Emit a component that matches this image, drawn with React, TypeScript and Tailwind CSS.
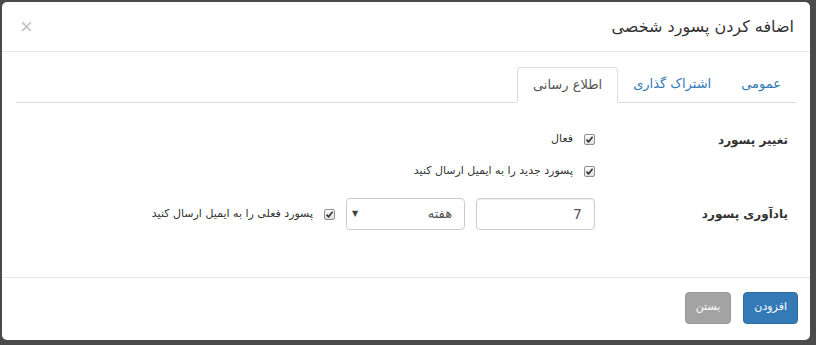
import React from "react"

const fa = "font-['DejaVu_Sans','Noto_Sans',sans-serif]"

function Check() {
  return (
    <span className="inline-flex w-[11px] h-[11px] items-center justify-center border border-[#8f8f8f] rounded-[2px] bg-gradient-to-b from-[#fdfdfd] to-[#dcdcdc]">
      <svg width="9" height="9" viewBox="0 0 9 9">
        <path d="M1.5 4.6 L3.6 6.8 L7.6 1.8" fill="none" stroke="#333" strokeWidth="1.6" />
      </svg>
    </span>
  )
}

export default function App() {
  return (
    <div className="w-[816px] h-[345px] bg-[#4a4a4a] p-[2px] pr-[6px] overflow-hidden">
      <div dir="rtl" className={`w-[808px] h-[338px] bg-white rounded-[5px] flex flex-col text-[#333] ${fa}`}>
        {/* header */}
        <div className="h-[50px] flex items-center justify-between px-[16px] border-b border-[#e5e5e5]">
          <h4 className="text-[16px] text-[#333]">اضافه کردن پسورد شخصی</h4>
          <span className="text-[22px] leading-none text-[#c4c4c4] font-['Liberation_Sans',sans-serif] pl-[2px]">×</span>
        </div>

        {/* body */}
        <div className="flex-1 px-[14px] pt-[15px]">
          <ul className="flex items-end border-b border-[#ddd] h-[36px] text-[13px]">
            <li className="h-[36px] px-[15px] flex items-center text-[#337ab7]">عمومی</li>
            <li className="h-[36px] px-[15px] flex items-center text-[#337ab7]">اشتراک گذاری</li>
            <li className="h-[36px] -mb-px px-[15px] flex items-center text-[#555] bg-white border border-[#ddd] border-b-white rounded-t-[4px]">
              اطلاع رسانی
            </li>
          </ul>

          <div className="pt-[24px] text-[11px]">
            <div className="flex">
              <div className="w-[201px] shrink-0 pr-[8px] font-bold text-[12px] leading-[26px]">تغییر پسورد</div>
              <div className="flex flex-col gap-[8px]">
                <label className="flex items-center gap-[11px] h-[24px]">
                  <Check />
                  <span>فعال</span>
                </label>
                <label className="flex items-center gap-[11px] h-[24px]">
                  <Check />
                  <span>پسورد جدید را به ایمیل ارسال کنید</span>
                </label>
              </div>
            </div>

            <div className="flex items-center mt-[15px]">
              <div className="w-[201px] shrink-0 pr-[8px] font-bold text-[12px]">یادآوری پسورد</div>
              <div className="flex items-center gap-[11px]">
                <div className="w-[119px] h-[32px] border border-[#ccc] rounded-[4px] flex items-center px-[12px] text-[14px] text-[#555] shadow-[inset_0_1px_1px_rgba(0,0,0,0.075)]">
                  7
                </div>
                <div className="w-[119px] h-[32px] border border-[#ccc] rounded-[4px] flex items-center justify-between px-[12px] pl-[5px] text-[13px] text-[#555]">
                  <span>هفته</span>
                  <span className="text-[8px] text-[#444]">▼</span>
                </div>
                <label className="flex items-center gap-[11px]">
                  <Check />
                  <span>پسورد فعلی را به ایمیل ارسال کنید</span>
                </label>
              </div>
            </div>
          </div>
        </div>

        {/* footer */}
        <div className="h-[63px] border-t border-[#e5e5e5] flex items-center gap-[12px] px-[12px] pb-[3px] text-[11px]">
          <button className="h-[32px] px-[10px] rounded-[4px] bg-[#337ab7] border border-[#2e6da4] text-white">افزودن</button>
          <button className="h-[32px] px-[10px] rounded-[4px] bg-[#a3a3a3] border border-[#9a9a9a] text-white">بستن</button>
        </div>
      </div>
    </div>
  )
}
